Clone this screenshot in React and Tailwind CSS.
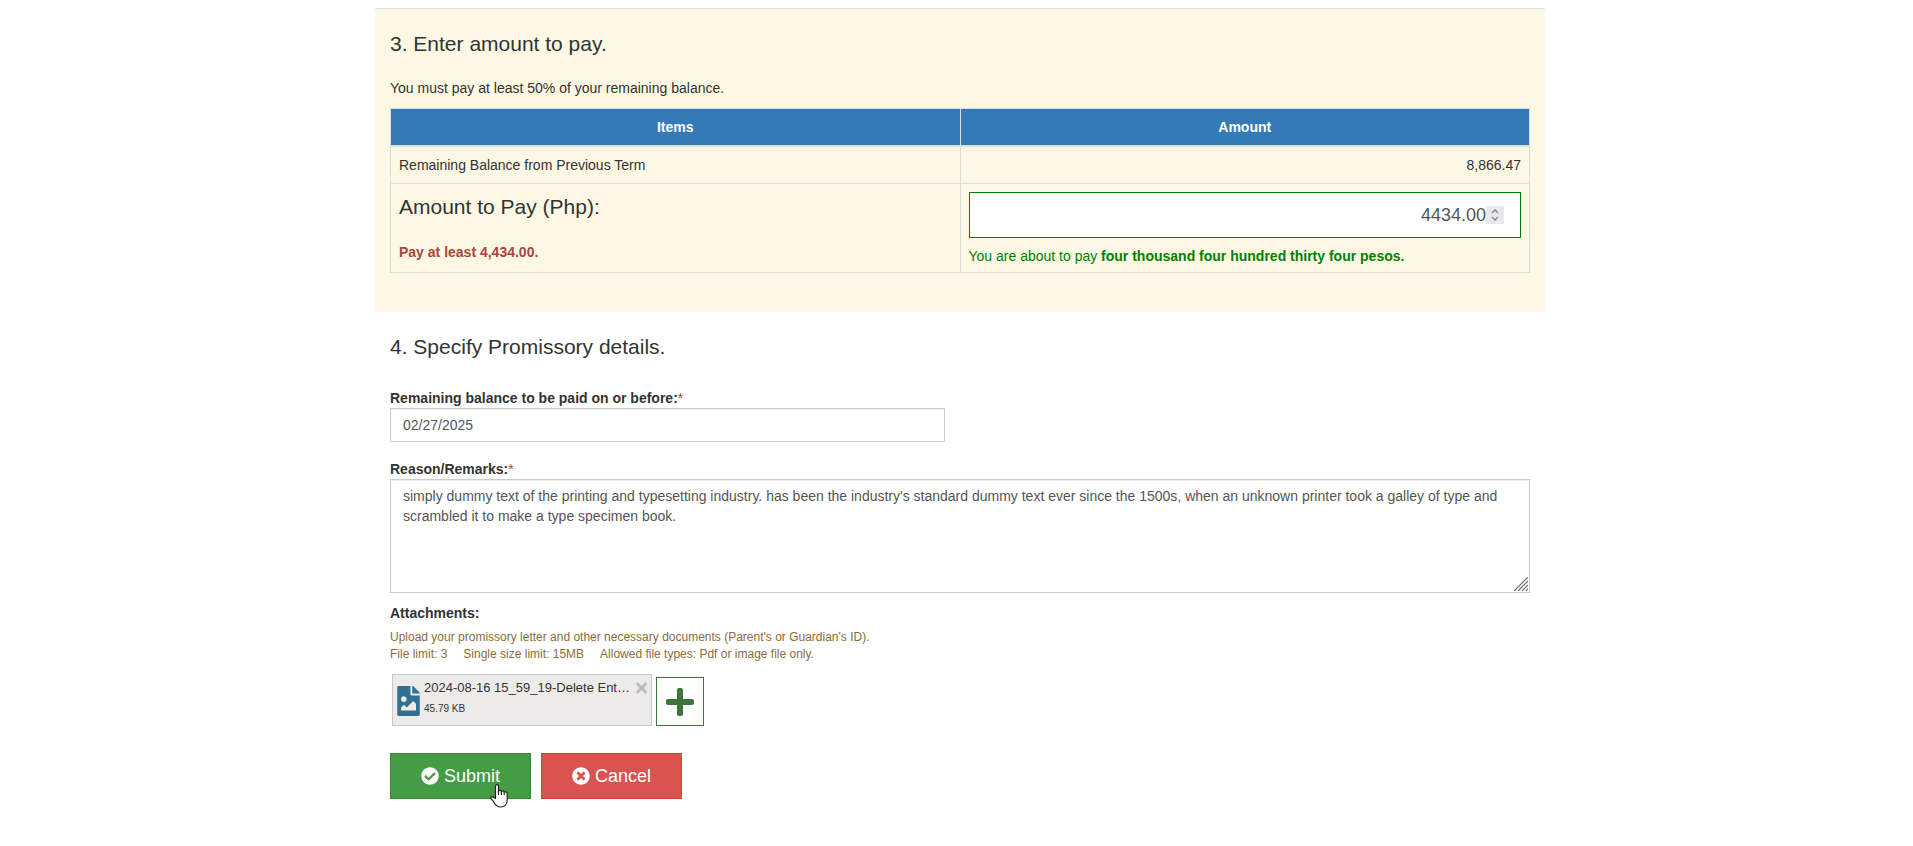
import React, { useState } from 'react'
import { FaCheckCircle, FaTimesCircle, FaPlus, FaFileImage, FaTimes } from 'react-icons/fa'

const REMARKS =
  "simply dummy text of the printing and typesetting industry. has been the industry's standard dummy text ever since the 1500s, when an unknown printer took a galley of type and scrambled it to make a type specimen book."

const Required = () => <span className="font-normal text-[#a94442]">*</span>

// Number field with its own stepper glyph
function AmountInput({ value, onChange }) {
  return (
    <div className="relative">
      <input
        id="amount"
        type="number"
        step="0.01"
        value={value}
        onChange={(e) => onChange(e.target.value)}
        className="block h-[46px] w-full appearance-none border border-[#008000] bg-white pr-[34px] pl-4 text-right text-lg text-[#555] outline-none [appearance:textfield] [&::-webkit-inner-spin-button]:appearance-none"
      />
      <span className="pointer-events-none absolute top-[14px] right-[17px] flex h-[18px] w-[18px] items-center justify-center bg-[#e9e9ed]">
        <svg width="8" height="12" viewBox="0 0 8 12" fill="none" stroke="#8f8f9d" strokeWidth="1.6">
          <path d="M1 4 L4 1 L7 4 M1 8 L4 11 L7 8" />
        </svg>
      </span>
    </div>
  )
}

function HandCursor() {
  return (
    <svg
      className="pointer-events-none absolute top-[30px] left-[99px]"
      width="20"
      height="24"
      viewBox="0 0 20 24"
      aria-hidden="true"
    >
      <path
        d="M5.5 14.5V2.2c0-2 3-2 3 0v5c.2-1.3 2.9-1.2 2.9.3.4-1 2.8-.8 2.8.8.5-.9 3-.6 3 1.1v6.1c0 4.4-2.2 7.5-6.6 7.5-3.6 0-5.2-2-6.6-4.8L1 14.6c-.8-1.6 1.1-2.6 2.4-1.3z"
        fill="#fff"
        stroke="#222"
        strokeWidth="1.2"
        strokeLinejoin="round"
      />
      <path d="M8.5 7v4M11.4 7.5v3.5M14.2 8.5v2.5" stroke="#222" strokeWidth="1.2" />
    </svg>
  )
}

export default function App() {
  const [amount, setAmount] = useState('4434.00')
  const [dueDate, setDueDate] = useState('02/27/2025')
  const [remarks, setRemarks] = useState(REMARKS)

  return (
    <div className="bg-white pt-2 pb-11 pl-[7px] font-['Liberation_Sans',Arial,sans-serif] text-sm leading-5 text-[#333]">
      <main className="mx-auto max-w-[1170px]">
        {/* Amount */}
        <section className="border-t border-[#ddd] bg-[#fcf8e3] px-[15px] pt-5 pb-[39px]">
          <h2 className="text-[21px] leading-[30px]">3. Enter amount to pay.</h2>
          <p className="mt-[19px] mb-[10px]">You must pay at least 50% of your remaining balance.</p>

          <table className="w-full table-fixed border-collapse border border-[#ddd]">
            <thead>
              <tr className="bg-[#337ab7] text-white">
                <th className="border border-b-2 border-[#ddd] p-2">Items</th>
                <th className="border border-b-2 border-[#ddd] p-2">Amount</th>
              </tr>
            </thead>
            <tbody>
              <tr>
                <td className="border border-[#ddd] p-2">Remaining Balance from Previous Term</td>
                <td className="border border-[#ddd] p-2 text-right">8,866.47</td>
              </tr>
              <tr className="align-top">
                <td className="border border-[#ddd] p-2">
                  <label htmlFor="amount" className="block text-[21px] leading-[30px]">
                    Amount to Pay (Php):
                  </label>
                  <p className="mt-5 font-bold text-[#a94442]">Pay at least 4,434.00.</p>
                </td>
                <td className="border border-[#ddd] px-2 pt-2 pb-1.5">
                  <AmountInput value={amount} onChange={setAmount} />
                  <p className="mt-2 text-[#008000]">
                    You are about to pay <strong>four thousand four hundred thirty four pesos.</strong>
                  </p>
                </td>
              </tr>
            </tbody>
          </table>
        </section>

        {/* Promissory details */}
        <section className="px-[15px] pt-5">
          <h2 className="text-[21px] leading-[30px]">4. Specify Promissory details.</h2>

          <div className="mt-[26px] grid grid-cols-2 gap-[30px]">
            <div>
              <label htmlFor="due" className="block font-bold">
                Remaining balance to be paid on or before:
                <Required />
              </label>
              <input
                id="due"
                type="text"
                value={dueDate}
                onChange={(e) => setDueDate(e.target.value)}
                className="block h-[34px] w-full border border-[#ccc] px-3 text-[#555] shadow-[inset_0_1px_1px_rgba(0,0,0,0.075)] outline-none"
              />
            </div>
          </div>

          <label htmlFor="remarks" className="mt-[17px] block font-bold">
            Reason/Remarks:
            <Required />
          </label>
          <div className="relative">
            <textarea
              id="remarks"
              rows={5}
              value={remarks}
              onChange={(e) => setRemarks(e.target.value)}
              className="block w-full resize-none border border-[#ccc] px-3 py-1.5 text-[#555] shadow-[inset_0_1px_1px_rgba(0,0,0,0.075)] outline-none"
            />
            <svg
              className="pointer-events-none absolute right-[2px] bottom-[2px]"
              width="14"
              height="14"
              viewBox="0 0 14 14"
              stroke="#666"
              strokeWidth="1.2"
              aria-hidden="true"
            >
              <path d="M0 14 L14 0 M4 14 L14 4 M8 14 L14 8 M12 14 L14 12" />
            </svg>
          </div>

          {/* Attachments */}
          <h3 className="mt-[10px] font-bold">Attachments:</h3>
          <div className="mt-1.5 text-xs leading-[17px] text-[#8a6d3b]">
            <p>Upload your promissory letter and other necessary documents (Parent's or Guardian's ID).</p>
            <p className="flex gap-4">
              <span>File limit: 3</span>
              <span>Single size limit: 15MB</span>
              <span>Allowed file types: Pdf or image file only.</span>
            </p>
          </div>

          <div className="mt-[11px] flex items-end gap-1 pl-[2px]">
            <div className="flex h-[52px] w-[260px] border border-[#c8c8c8] bg-[#edebea] pl-1">
              <FaFileImage className="mt-[11px] h-[30px] w-[23px] shrink-0 text-[#31708f]" />
              <div className="ml-1 grow pt-1">
                <p className="text-[13px] leading-[18px] whitespace-nowrap">2024-08-16 15_59_19-Delete Ent…</p>
                <p className="mt-1.5 text-[10px] leading-3">45.79 KB</p>
              </div>
              <button type="button" aria-label="Remove file" className="mt-[5px] mr-1 h-4 text-[#bbb]">
                <FaTimes className="h-4 w-[11px]" />
              </button>
            </div>
            <button
              type="button"
              aria-label="Add file"
              className="flex h-[49px] w-12 items-center justify-center border border-[#3c763d] bg-white text-[#3c763d]"
            >
              <FaPlus className="h-8 w-7" />
            </button>
          </div>

          {/* Actions */}
          <div className="mt-[27px] flex gap-[10px] text-lg text-white">
            <button
              type="submit"
              className="relative flex h-[46px] w-[141px] items-center justify-center gap-[5px] border border-[#398439] bg-[#449d44]"
            >
              <FaCheckCircle />
              Submit
              <HandCursor />
            </button>
            <button
              type="button"
              className="flex h-[46px] w-[141px] items-center justify-center gap-[5px] border border-[#d43f3a] bg-[#d9534f]"
            >
              <FaTimesCircle />
              Cancel
            </button>
          </div>
        </section>
      </main>
    </div>
  )
}
